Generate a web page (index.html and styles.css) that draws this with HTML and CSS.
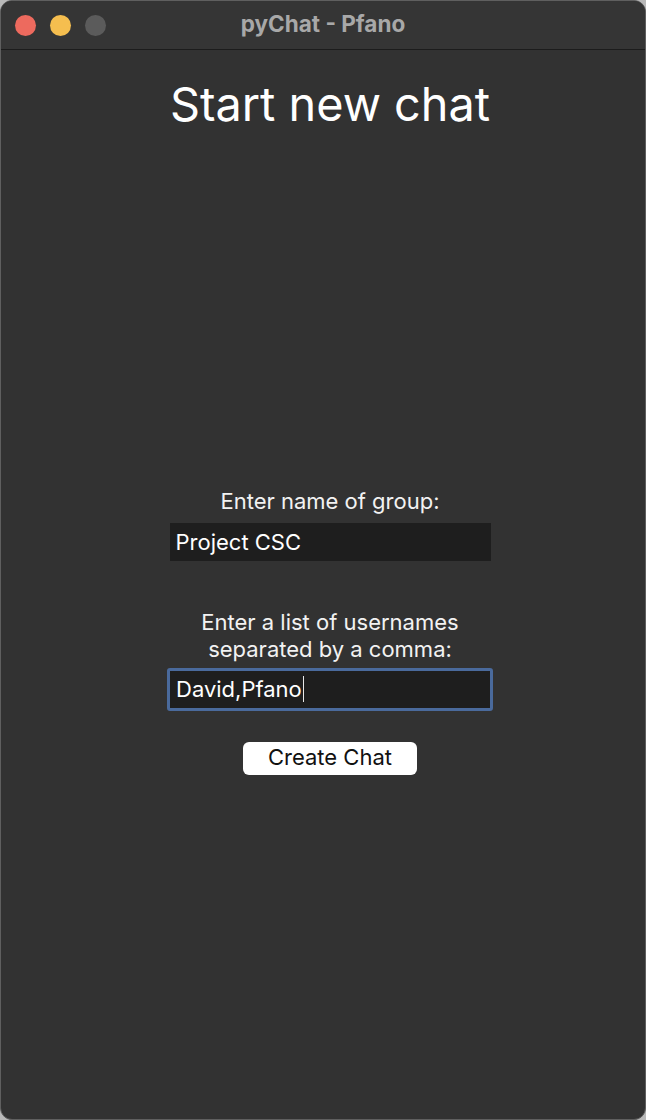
FILE: index.html
```html
<!DOCTYPE html>
<html lang="en">
<head>
<meta charset="utf-8">
<title>pyChat - Pfano</title>
<link rel="stylesheet" href="styles.css">
</head>
<body>
<div class="window">
  <header class="titlebar">
    <div class="lights">
      <span class="light red"></span>
      <span class="light yellow"></span>
      <span class="light grey"></span>
    </div>
    <div class="title">pyChat - Pfano</div>
    <div class="spacer"></div>
  </header>
  <main class="content">
    <h1 class="heading">Start new chat</h1>
    <form class="form">
      <label class="label">Enter name of group:</label>
      <div class="field">Project CSC</div>
      <label class="label label-two">Enter a list of usernames<br>separated by a comma:</label>
      <div class="field field-focus">David,Pfano<span class="caret"></span></div>
      <button type="button" class="button">Create Chat</button>
    </form>
  </main>
</div>
</body>
</html>
```

FILE: styles.css
```css
* { box-sizing: border-box; }

html, body {
  margin: 0;
  padding: 0;
  background: #b9b9b9;
}

body {
  width: 646px;
  height: 1120px;
  font-family: Inter, "Noto Sans", "Liberation Sans", sans-serif;
}

.window {
  width: 646px;
  height: 1120px;
  background: #323232;
  border: 1px solid #5f5f5f;
  border-radius: 12px;
  overflow: hidden;
  display: flex;
  flex-direction: column;
}

.titlebar {
  height: 49px;
  flex: none;
  background: #353535;
  border-bottom: 1px solid #1c1c1c;
  display: grid;
  grid-template-columns: 1fr auto 1fr;
  align-items: center;
}

.lights {
  display: flex;
  gap: 14px;
  padding-left: 14px;
}

.light {
  width: 21px;
  height: 21px;
  border-radius: 50%;
  display: block;
}

.red { background: #ed6a5e; }
.yellow { background: #f5be4f; }
.grey { background: #5b5b5b; }

.title {
  color: #a8a8a8;
  font-weight: 700;
  font-size: 22.5px;
  line-height: 28px;
  padding-bottom: 2px;
}

.content {
  flex: 1;
  display: flex;
  flex-direction: column;
  align-items: center;
  padding-left: 14px;
}

.heading {
  margin: 25px 0 0;
  font-size: 46.8px;
  line-height: 58px;
  font-weight: 400;
  color: #ffffff;
}

.form {
  margin-top: 355px;
  display: flex;
  flex-direction: column;
  align-items: center;
}

.label {
  display: block;
  color: #f2f2f2;
  font-size: 22px;
  line-height: 27px;
  text-align: center;
}

.label-two {
  margin-top: 48px;
}

.field {
  margin-top: 8px;
  width: 321px;
  height: 38px;
  background: #1e1e1e;
  color: #ffffff;
  font-size: 22px;
  line-height: 38px;
  padding-left: 6px;
  white-space: nowrap;
}

.field-focus {
  margin-top: 5px;
  width: 326px;
  height: 43px;
  border: 3px solid #4a6a9c;
  border-radius: 3px;
  line-height: 34px;
  padding-bottom: 2px;
  display: flex;
  align-items: center;
}

.caret {
  display: inline-block;
  width: 1.5px;
  height: 26px;
  background: #e8e8e8;
  margin-left: 1px;
}

.button {
  margin-top: 31px;
  width: 174px;
  height: 33px;
  border: none;
  border-radius: 6px;
  background: #ffffff;
  color: #111111;
  font-family: Inter, "Noto Sans", "Liberation Sans", sans-serif;
  font-size: 22px;
  line-height: 30px;
  padding: 0 0 3px;
}
```
